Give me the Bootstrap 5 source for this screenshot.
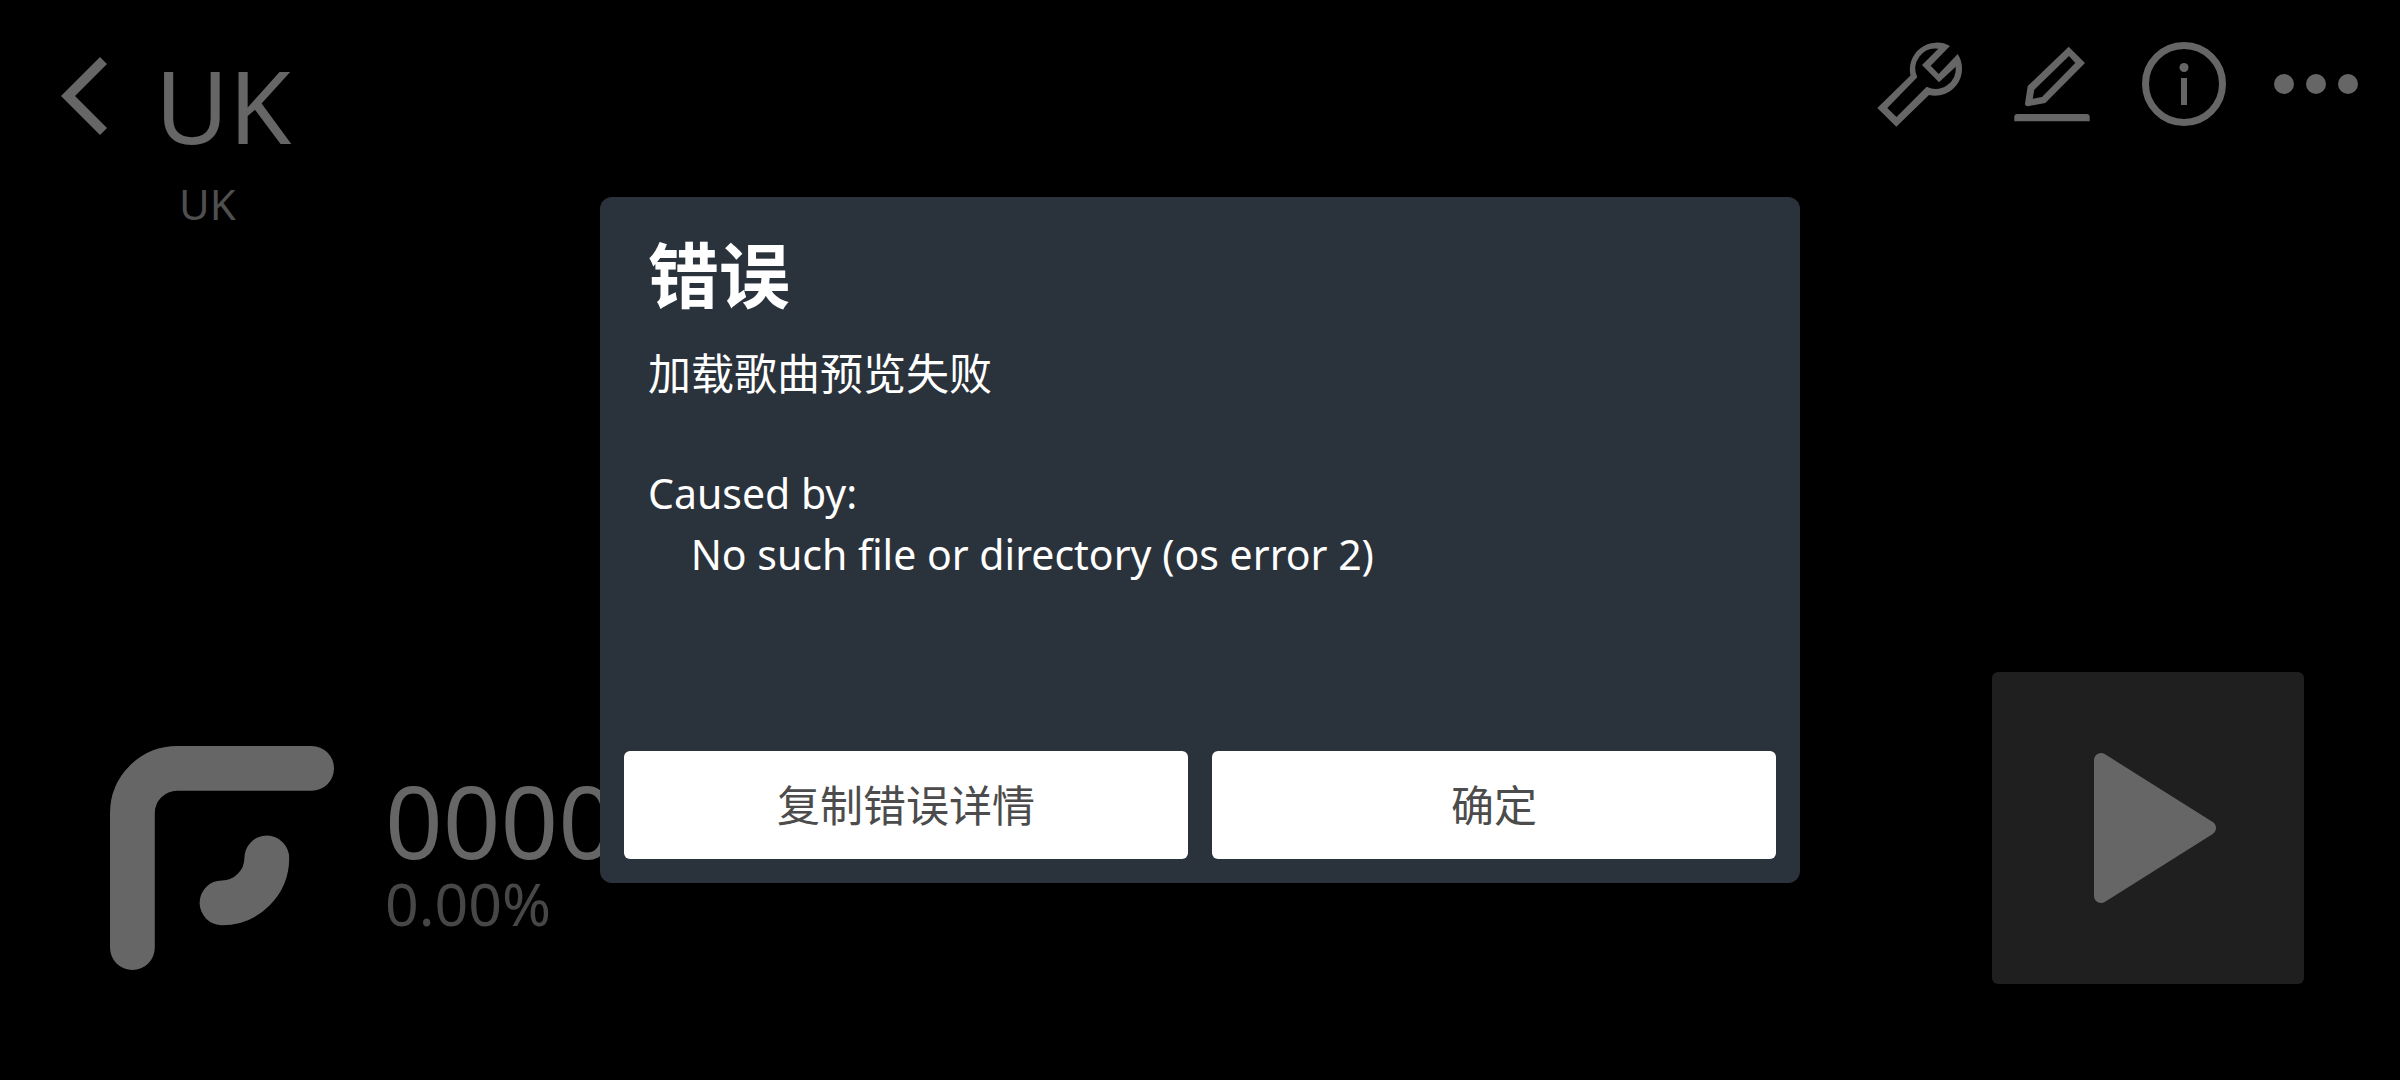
<!DOCTYPE html>
<html lang="zh-CN">
<head>
<meta charset="utf-8">
<meta name="viewport" content="width=device-width, initial-scale=1">
<title>UK</title>
<link href="https://cdn.jsdelivr.net/npm/bootstrap@5.3.0/dist/css/bootstrap.min.css" rel="stylesheet">
<style>
body { background: #000; color: #666; font-family: "Noto Sans", "Noto Sans CJK SC", sans-serif; }
.icon-btn { width: 96px; height: 96px; padding: 0; border: 0; background: none; color: inherit; }
.icon-btn svg, .play-btn svg { display: block; width: 100%; height: 100%; }
.top-bar { padding: 36px; }
.back-area { gap: 23px; }
.back-area .icon-btn { margin-top: 12px; }
.tool-area { gap: 36px; }
.song-title { font-size: 101px; line-height: 138px; font-weight: 400; }
.song-artist { font-size: 42px; line-height: 60px; padding-left: 24px; color: #4f4f4f; }
.bottom-bar { padding: 0 96px 96px 110px; }
.record { gap: 51px; margin-bottom: 14px; }
.result { padding-bottom: 34px; }
.grade { width: 224px; height: 224px; }
.score { font-size: 101px; line-height: 100px; }
.accuracy { font-size: 59px; line-height: 66px; color: #474747; }
.play-btn { width: 312px; height: 312px; padding: 0; border: 0; border-radius: 6px; background: #1f1f1f; color: #666; }
.error-dialog { max-width: 50%; }
.error-box { background: #2a323b; color: #fff; border: 0; border-radius: 12px; }
.error-body { padding: 32px 48px 0; min-height: 530px; }
.error-title { font: 700 71px/84px "Noto Sans CJK SC", sans-serif; margin-bottom: 28px; }
.error-text { font-family: "Noto Sans CJK SC", sans-serif; font-size: 43px; line-height: 61px; }
.error-text .latin { font-family: "Noto Sans", sans-serif; font-size: 41px; white-space: pre-wrap; }
.error-actions { padding: 24px; gap: 24px; }
.error-actions .btn { height: 108px; padding: 0 12px 4px; border: 0; border-radius: 6px; background: #fff; color: #4c4c4c; font: 400 43px/61px "Noto Sans CJK SC", sans-serif; }
</style>
</head>
<body>
<main class="d-flex flex-column justify-content-between min-vh-100">
  <header class="top-bar d-flex justify-content-between align-items-start">
    <div class="back-area d-flex">
      <button class="icon-btn" type="button" aria-label="返回"><svg viewBox="0 0 96 96" fill="currentColor"><path d="M25 48 64 9l7 7-32 32 32 32-7 7z"/></svg></button>
      <div>
        <h1 class="song-title m-0">UK</h1>
        <div class="song-artist">UK</div>
      </div>
    </div>
    <nav class="tool-area d-flex" aria-label="工具">
      <button class="icon-btn" type="button" aria-label="设置"><svg viewBox="0 0 96 96" fill="currentColor" fill-rule="evenodd"><path d="M5.3 72 38.5 39.5A27 27 0 0 1 78 10L58.7 29.7l8 8.3L85.7 18A27 27 0 0 1 57 59L24.3 90.7ZM15.3 72l9.2 9L54.7 50.7A20.2 20.2 0 0 0 83.7 30.7L67 46.3 50 29 66.3 12.7A20.2 20.2 0 0 0 45.3 41.3Z"/></svg></button>
      <button class="icon-btn" type="button" aria-label="编辑"><svg viewBox="0 0 96 96" fill="currentColor" fill-rule="evenodd"><path d="M64.7 10.7 81 27 41.3 67 24 70.2Q20.6 70 21 67.5L23.7 50ZM65 20 30.3 53.7 28.7 62.7 38 61 71.3 27ZM10.3 85.3V81q0-3 3-3H82.7q3 0 3 3v4.3z"/></svg></button>
      <button class="icon-btn" type="button" aria-label="信息"><svg viewBox="0 0 96 96" fill="currentColor"><circle cx="48" cy="48" r="38.5" fill="none" stroke="currentColor" stroke-width="7"/><circle cx="48" cy="31.5" r="4.5"/><path d="M45 42h6v27h-6z"/></svg></button>
      <button class="icon-btn" type="button" aria-label="更多"><svg viewBox="0 0 96 96" fill="currentColor"><circle cx="16" cy="48" r="10"/><circle cx="48" cy="48" r="10"/><circle cx="80" cy="48" r="10"/></svg></button>
    </nav>
  </header>
  <footer class="bottom-bar d-flex justify-content-between align-items-end">
    <div class="record d-flex align-items-end">
      <svg class="grade" viewBox="0 0 10 10" fill="none" stroke="currentColor" stroke-width="2" stroke-linecap="round" aria-hidden="true"><path d="M1 9V3a2 2 0 0 1 2-2h6M7 5a2 2 0 0 1-2 2"/></svg>
      <div class="result">
        <div class="score">0000000</div>
        <div class="accuracy">0.00%</div>
      </div>
    </div>
    <button class="play-btn" type="button" aria-label="播放"><svg viewBox="0 0 312 312" fill="currentColor" stroke="currentColor" stroke-width="14" stroke-linejoin="round"><path d="M109 88v136l108-68z"/></svg></button>
  </footer>
</main>

<div class="modal d-block" tabindex="-1" role="dialog" aria-modal="true" aria-labelledby="errorTitle">
  <div class="modal-dialog modal-dialog-centered error-dialog">
    <div class="modal-content error-box">
      <div class="error-body">
        <h2 class="error-title" id="errorTitle">错误</h2>
        <div class="error-text">
          <div>加载歌曲预览失败</div>
          <br>
          <div class="latin">Caused by:
    No such file or directory (os error 2)</div>
        </div>
      </div>
      <div class="error-actions d-flex">
        <button class="btn flex-fill w-50" type="button">复制错误详情</button>
        <button class="btn flex-fill w-50" type="button">确定</button>
      </div>
    </div>
  </div>
</div>
<script src="https://cdn.jsdelivr.net/npm/bootstrap@5.3.0/dist/js/bootstrap.bundle.min.js"></script>
</body>
</html>
